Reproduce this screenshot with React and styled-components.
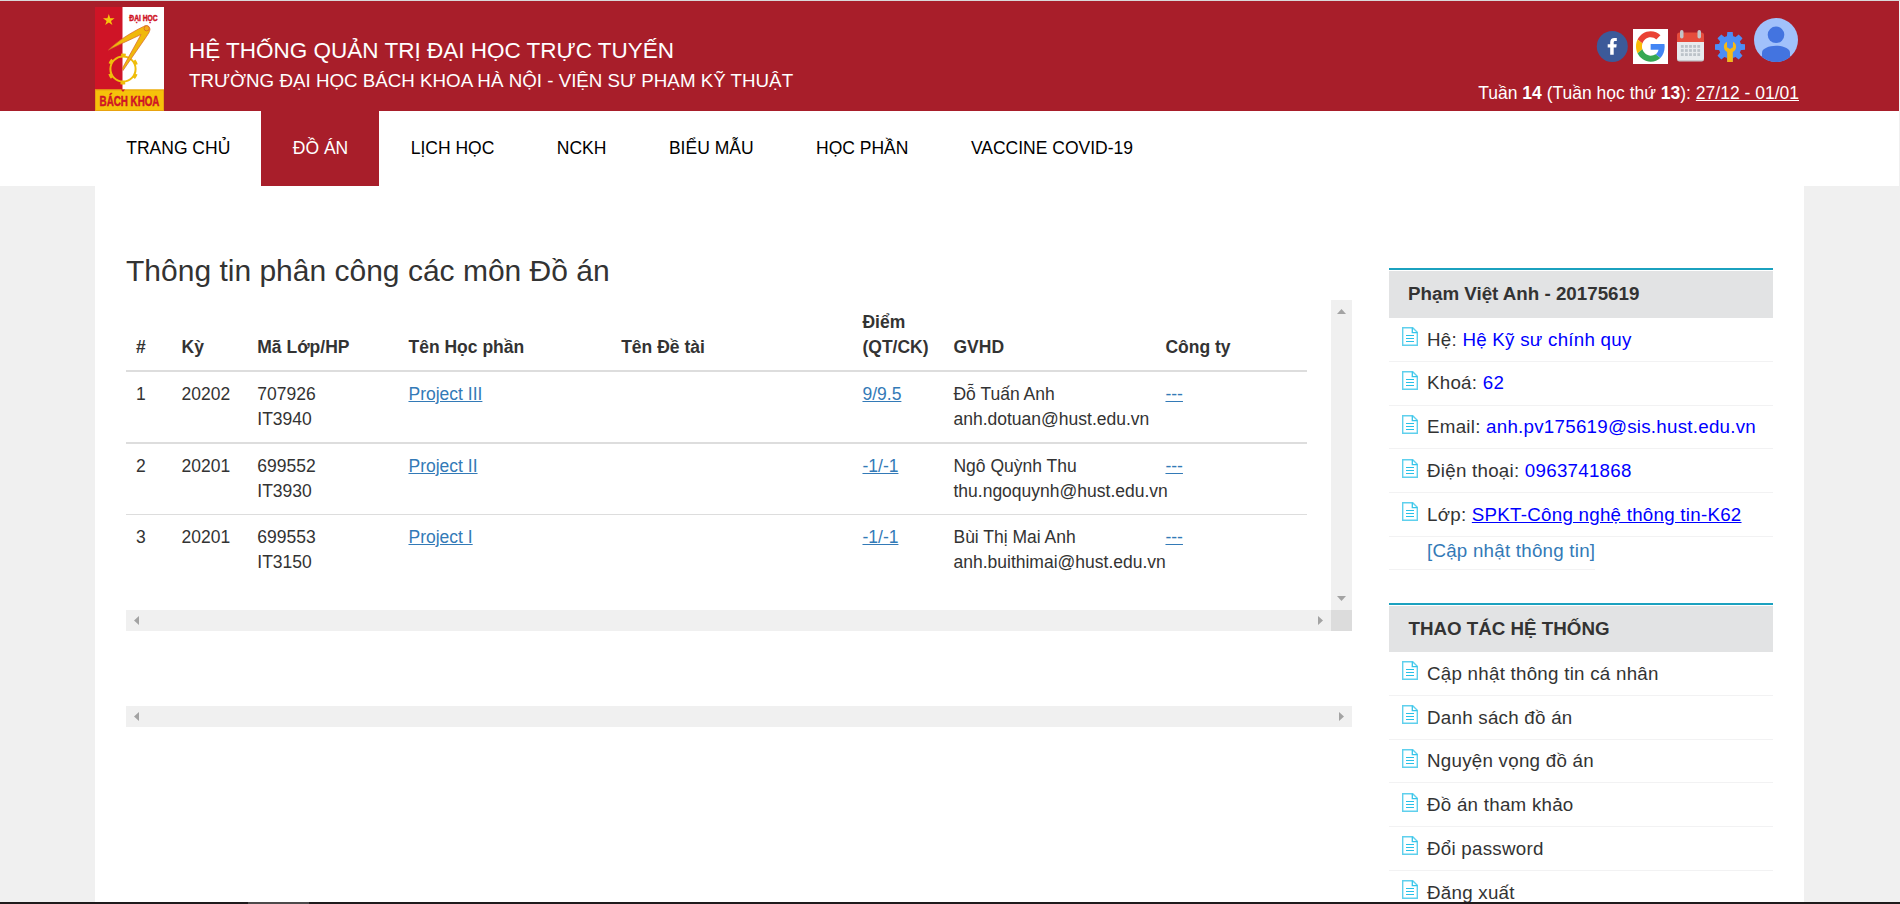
import React from 'react';
import styled, { createGlobalStyle } from 'styled-components';

const GlobalStyle = createGlobalStyle`
  * { box-sizing: border-box; }
  body {
    margin: 0;
    background: #f0f0f0;
    color: #333;
    font-family: "Liberation Sans", Arial, sans-serif;
    font-size: 17.5px;
    line-height: 25px;
    overflow: hidden;
  }
  a { color: inherit; }
`;

const Page = styled.div`
  display: flex;
  flex-direction: column;
  height: 904px;
  overflow: hidden;
  border-top: 1px solid #d9d9d9;
`;

const Header = styled.header`
  flex: none;
  height: 110px;
  margin-right: 1px;
  background: #a81e2a;
  color: #fff;
`;

const Container = styled.div`
  width: 1709px;
  margin-left: 95px;
  display: flex;
`;

const LogoBox = styled.div`
  width: 69px;
  height: 104px;
  margin-top: 6px;
  svg { display: block; overflow: visible; }
`;

const Titles = styled.div`
  flex: 1;
  padding: 33px 0 0 25px;
  white-space: nowrap;
`;

const SiteTitle = styled.div`
  font-size: 22.5px;
  line-height: 33px;
`;

const SiteSubtitle = styled.div`
  font-size: 18.75px;
  line-height: 26px;
  margin-top: 1px;
`;

const Tools = styled.div`
  display: flex;
  flex-direction: column;
  align-items: flex-end;
  padding: 17px 5px 0 0;
`;

const IconRow = styled.div`
  display: flex;
  height: 64px;
  svg { display: block; }
`;

const WeekInfo = styled.div`
  white-space: nowrap;
  line-height: 22px;
`;

const NavBar = styled.nav`
  flex: none;
  height: 75px;
  margin-right: 1px;
  background: #fff;
`;

const NavItem = styled.a`
  height: 75px;
  margin-left: ${(p) => (p.$active ? '-1px' : '0')};
  padding: 25px 31.25px 0 ${(p) => (p.$active ? '32.25px' : '31.25px')};
  white-space: nowrap;
  text-decoration: none;
  color: ${(p) => (p.$active ? '#fff' : '#000')};
  background: ${(p) => (p.$active ? '#a81e2a' : 'transparent')};
`;

const Content = styled.main`
  flex: 1;
  min-height: 0;
  width: 1709px;
  margin-left: 95px;
  padding: 0 31px;
  background: #fff;
  display: flex;
  justify-content: space-between;
  overflow: hidden;
`;

const MainColumn = styled.section`
  width: 1226px;
  padding-top: 68px;
`;

const Heading = styled.h1`
  margin: 0 0 13px;
  font-size: 30px;
  line-height: 33px;
  font-weight: 400;
  white-space: nowrap;
`;

const ScrollBox = styled.div`
  display: grid;
  grid-template-columns: 1205px 21px;
  grid-template-rows: 310px 21px;
`;

const Track = styled.div`
  background: #f0f0f0;
  display: flex;
  flex-direction: ${(p) => (p.$vertical ? 'column' : 'row')};
  justify-content: space-between;
  align-items: center;
  height: ${(p) => (p.$vertical ? '310px' : '21px')};
  padding: ${(p) => (p.$vertical ? '9px 0' : '0 8px')};
  margin-top: ${(p) => p.$gap || '0'};
  svg { display: block; fill: #a3a3a3; }
`;

const Corner = styled.div`
  background: #dcdcdc;
`;

const Table = styled.table`
  width: 1181px;
  table-layout: fixed;
  border-collapse: separate;
  border-spacing: 0;
  align-self: start;
`;

const Th = styled.th`
  padding: 10px;
  text-align: left;
  vertical-align: bottom;
  border-bottom: 2px solid #ddd;
  white-space: nowrap;
`;

const Td = styled.td`
  padding: 10px;
  vertical-align: top;
  white-space: nowrap;
  border-bottom: ${(p) => p.$line}px solid #ddd;
`;

const Link = styled.a`
  color: #337ab7;
  text-decoration: underline;
`;

const Sidebar = styled.aside`
  width: 384px;
  padding-top: 82px;
`;

const Panel = styled.section`
  height: ${(p) => p.$height || 'auto'};
  font-size: 18.75px;
  letter-spacing: 0.25px;
`;

const PanelTitle = styled.h2`
  margin: 0;
  height: ${(p) => p.$height};
  padding: 11px 0 0 ${(p) => p.$indent};
  border-top: 2px solid #1ba1bf;
  background: #e2e3e4;
  background-clip: padding-box;
  box-shadow: inset 0 1px #fff;
  font-size: 18.75px;
  line-height: 25px;
  letter-spacing: 0;
`;

const Item = styled.div`
  display: flex;
  height: 43.75px;
  padding: 7.7px 0 0 13px;
  border-bottom: 1px solid #f2f2f3;
  line-height: 27px;
  white-space: nowrap;
  svg { flex: none; margin: 1.6px 9px 0 0; display: block; }
`;

const UpdateLink = styled.a`
  display: block;
  width: 206px;
  height: 33px;
  padding-left: 38px;
  border-bottom: 1px solid #f2f2f3;
  line-height: 27px;
  letter-spacing: 0.23px;
  white-space: nowrap;
  color: #337ab7;
  text-decoration: none;
`;

const Value = styled.span`
  color: #00f;
  text-decoration: ${(p) => (p.$underline ? 'underline' : 'none')};
`;

const BottomBar = styled.div`
  flex: none;
  height: 2px;
  background: #1f1b1c;
  padding-left: 248px;
`;

const BottomMark = styled.div`
  width: 61px;
  height: 2px;
  background: #4d4a4b;
`;

const LogoText = styled.text`
  font-family: "Liberation Sans", Arial, sans-serif;
  font-weight: 700;
  font-size: ${(p) => p.$size}px;
  fill: #cf1426;
  stroke: #cf1426;
  stroke-width: 0.5px;
`;

const Logo = () => (
  <svg width="69" height="104" viewBox="0 0 69 104">
    <rect width="69" height="104" fill="#fff" />
    <rect width="27.500" height="84" fill="#cf1426" />
    <path d="M13.800 7l1.400 4.200h4.400l-3.600 2.700 1.400 4.200-3.600-2.600-3.600 2.600 1.400-4.200L8 11.200h4.400z" fill="#f7c50b" />
    <circle cx="28" cy="62" r="12.600" fill="none" stroke="#efbd0b" strokeWidth="2" />
    <circle cx="28" cy="62" r="14" fill="none" stroke="#efbd0b" strokeWidth="3" strokeDasharray="4.660 10" strokeDashoffset="-5" />
    <path d="M13.500 43C22 34.500 35 26 48.500 19.500 51 17.500 55 19 55 22.500 54.500 25.500 53 27 51.500 29.500L28 63.500 27.500 61 46 27.500C37 32 24 37.500 13.500 43z" fill="#f0b80c" stroke="#d7632b" strokeWidth=".7" />
    <circle cx="51.700" cy="21.300" r="2.600" fill="#f4ad1b" stroke="#d7632b" strokeWidth=".8" />
    <rect y="82.500" width="69" height="21.500" fill="#f6c20a" />
    <rect x=".5" y="83" width="68" height="20.500" fill="none" stroke="#e8a30f" />
    <path d="M26 82.500h4l-2 2.500z" fill="#cf1426" />
    <LogoText $size={9.2} transform="translate(34.300 13.800) scale(.73 1)">ĐẠI HỌC</LogoText>
    <LogoText $size={14.2} transform="translate(4.600 98.600) scale(.69 1)">BÁCH KHOA</LogoText>
  </svg>
);

const TEETH = [0, 45, 90, 135, 180, 225, 270, 315];
const DOT_COLS = [5.5, 9.6, 13.7, 17.8, 21.9];
const DOT_ROWS = [16.5, 20.6, 24.7];

const HeaderIcons = () => (
  <svg width="203" height="64" viewBox="1596 18 203 64">
    <circle cx="1612.300" cy="46.500" r="15.500" fill="#3c5a99" />
    <path d="M1610.200 54.700v-7.300h-2.500v-3.200h2.500v-1.900c0-2.900 1.600-4.300 4.100-4.300h2.500v3.100h-1.500c-1.300 0-1.600.7-1.600 1.600v1.500h3l-.4 3.200h-2.600v7.300z" fill="#fff" />
    <rect x="1633" y="29" width="35" height="35" fill="#fff" />
    <g transform="translate(1636 31.200) scale(.61 .635)">
      <path fill="#EA4335" d="M24 9.500c3.540 0 6.710 1.220 9.210 3.600l6.850-6.850C35.900 2.380 30.470 0 24 0 14.620 0 6.510 5.380 2.560 13.220l7.980 6.190C12.430 13.720 17.740 9.500 24 9.500z" />
      <path fill="#4285F4" d="M46.980 24.550c0-1.570-.15-3.090-.38-4.550H24v9.020h12.940c-.58 2.960-2.260 5.480-4.780 7.180l7.730 6c4.510-4.180 7.090-10.360 7.090-17.650z" />
      <path fill="#FBBC05" d="M10.530 28.590c-.48-1.450-.76-2.990-.76-4.590s.27-3.140.76-4.590l-7.980-6.190C.92 16.460 0 20.120 0 24s.92 7.540 2.560 10.780z" />
      <path fill="#34A853" d="M24 48c6.480 0 11.930-2.130 15.890-5.810l-7.730-6c-2.150 1.450-4.920 2.300-8.160 2.300-6.260 0-11.570-4.220-13.470-9.910l-7.980 6.190C6.510 42.620 14.620 48 24 48z" />
    </g>
    <g transform="translate(1677 30)">
      <rect y="8" width="27" height="23.500" rx="2.500" fill="#c9ccd0" />
      <rect y="8" width="27" height="22" rx="2" fill="#e8ebee" />
      <path d="M0 12V5q0-2.500 2.500-2.500h22Q27 2.500 27 5v7z" fill="#e64c3c" />
      <rect x="3" y="0" width="3.500" height="8.500" rx="1.700" fill="#c3c4c6" />
      <rect x="20.500" y="0" width="3.500" height="8.500" rx="1.700" fill="#c3c4c6" />
      {DOT_ROWS.map((y) => DOT_COLS.map((x) => (
        <rect key={`${x}-${y}`} x={x - 1.6} y={y - 1.5} width="2.800" height="2.800" fill="#bcc3c9" />
      )))}
    </g>
    <g transform="translate(1730 47)">
      {TEETH.map((a) => (
        <path key={a} d="M-3.300 -9L-2.700 -15H2.700L3.300 -9z" fill="#4d8df5" transform={`rotate(${a})`} />
      ))}
      <circle r="11.300" fill="#4d8df5" />
      <path d="M-2.800 15V5C-5.500 3.500-6.500 1-6 -1.500-5.700-3.500-4.500-4.500-3-5.300V0.200L0 2 3 .2V-5.300C4.500-4.500 5.700-3.500 6-1.500 6.500 1 5.500 3.500 2.800 5V15z" fill="#f7b916" />
    </g>
    <circle cx="1776" cy="40" r="22" fill="#a1c1fb" />
    <circle cx="1776" cy="34.800" r="8.300" fill="#4374e0" />
    <path d="M1762 57V52.500C1762 48.500 1769 45.700 1776 45.700S1790 48.500 1790 52.500V57A22 22 0 0 1 1762 57z" fill="#4374e0" />
  </svg>
);

const DocIcon = () => (
  <svg width="16" height="19" viewBox="0 0 16 19" fill="none">
    <path d="M.7 .7H10.700L15.300 5.300V18.200H.7z" stroke="#5fd0ed" strokeWidth="1.400" />
    <path d="M10.300 .8V5.600H15.300" stroke="#35c5ea" strokeWidth="1.300" />
    <path d="M4 8.500H12M4 11.500H12M4 14.500H12" stroke="#27c1e8" strokeWidth="1.200" />
  </svg>
);

const ARROWS = {
  up: [9, 5, 'M4.500 0L9 5H0z'],
  down: [9, 5, 'M0 0H9L4.500 5z'],
  left: [5, 9, 'M5 0V9L0 4.500z'],
  right: [5, 9, 'M0 0L5 4.500 0 9z'],
};

const Arrow = ({ to }) => {
  const [w, h, d] = ARROWS[to];
  return (
    <svg width={w} height={h} viewBox={`0 0 ${w} ${h}`}>
      <path d={d} />
    </svg>
  );
};

const NAV = ['TRANG CHỦ', 'ĐỒ ÁN', 'LỊCH HỌC', 'NCKH', 'BIỂU MẪU', 'HỌC PHẦN', 'VACCINE COVID-19'];

const COLUMNS = [
  ['#', 45.5],
  ['Kỳ', 75.8],
  ['Mã Lớp/HP', 151.2],
  ['Tên Học phần', 212.7],
  ['Tên Đề tài', 241.3],
  [<>Điểm<br />(QT/CK)</>, 91],
  ['GVHD', 212],
  ['Công ty', 151.5],
];

const ROWS = [
  { term: '20202', cls: '707926', code: 'IT3940', name: 'Project III', mark: '9/9.5', teacher: 'Đỗ Tuấn Anh', mail: 'anh.dotuan@hust.edu.vn', line: 2 },
  { term: '20201', cls: '699552', code: 'IT3930', name: 'Project II', mark: '-1/-1', teacher: 'Ngô Quỳnh Thu', mail: 'thu.ngoquynh@hust.edu.vn', line: 1 },
  { term: '20201', cls: '699553', code: 'IT3150', name: 'Project I', mark: '-1/-1', teacher: 'Bùi Thị Mai Anh', mail: 'anh.buithimai@hust.edu.vn', line: 0 },
];

const PROFILE = [
  ['Hệ', 'Hệ Kỹ sư chính quy'],
  ['Khoá', '62'],
  ['Email', 'anh.pv175619@sis.hust.edu.vn'],
  ['Điện thoại', '0963741868'],
  ['Lớp', 'SPKT-Công nghệ thông tin-K62', true],
];

const ACTIONS = ['Cập nhật thông tin cá nhân', 'Danh sách đồ án', 'Nguyện vọng đồ án', 'Đồ án tham khảo', 'Đổi password', 'Đăng xuất'];

export default function App() {
  return (
    <>
      <GlobalStyle />
      <Page>
        <Header>
          <Container>
            <LogoBox><Logo /></LogoBox>
            <Titles>
              <SiteTitle>HỆ THỐNG QUẢN TRỊ ĐẠI HỌC TRỰC TUYẾN</SiteTitle>
              <SiteSubtitle>TRƯỜNG ĐẠI HỌC BÁCH KHOA HÀ NỘI - VIỆN SƯ PHẠM KỸ THUẬT</SiteSubtitle>
            </Titles>
            <Tools>
              <IconRow><HeaderIcons /></IconRow>
              <WeekInfo>
                Tuần <b>14</b> (Tuần học thứ <b>13</b>): <u>27/12 - 01/01</u>
              </WeekInfo>
            </Tools>
          </Container>
        </Header>
        <NavBar>
          <Container>
            {NAV.map((label, i) => (
              <NavItem key={label} $active={i === 1}>{label}</NavItem>
            ))}
          </Container>
        </NavBar>
        <Content>
          <MainColumn>
            <Heading>Thông tin phân công các môn Đồ án</Heading>
            <ScrollBox>
              <Table>
                <colgroup>
                  {COLUMNS.map(([, w], i) => <col key={i} width={w} />)}
                </colgroup>
                <thead>
                  <tr>{COLUMNS.map(([label], i) => <Th key={i}>{label}</Th>)}</tr>
                </thead>
                <tbody>
                  {ROWS.map((r, i) => (
                    <tr key={r.cls}>
                      <Td $line={r.line}>{i + 1}</Td>
                      <Td $line={r.line}>{r.term}</Td>
                      <Td $line={r.line}>{r.cls}<br />{r.code}</Td>
                      <Td $line={r.line}><Link>{r.name}</Link></Td>
                      <Td $line={r.line} />
                      <Td $line={r.line}><Link>{r.mark}</Link></Td>
                      <Td $line={r.line}>{r.teacher}<br />{r.mail}</Td>
                      <Td $line={r.line}><Link>---</Link></Td>
                    </tr>
                  ))}
                </tbody>
              </Table>
              <Track $vertical><Arrow to="up" /><Arrow to="down" /></Track>
              <Track><Arrow to="left" /><Arrow to="right" /></Track>
              <Corner />
            </ScrollBox>
            <Track $gap="75px"><Arrow to="left" /><Arrow to="right" /></Track>
          </MainColumn>
          <Sidebar>
            <Panel $height="335px">
              <PanelTitle $height="50px" $indent="19px">Phạm Việt Anh - 20175619</PanelTitle>
              {PROFILE.map(([label, value, underline]) => (
                <Item key={label}>
                  <DocIcon />
                  <span>{label}: <Value $underline={underline}>{value}</Value></span>
                </Item>
              ))}
              <UpdateLink>[Cập nhật thông tin]</UpdateLink>
            </Panel>
            <Panel>
              <PanelTitle $height="49.15px" $indent="19.5px">THAO TÁC HỆ THỐNG</PanelTitle>
              {ACTIONS.map((label) => (
                <Item key={label}>
                  <DocIcon />
                  <span>{label}</span>
                </Item>
              ))}
            </Panel>
          </Sidebar>
        </Content>
        <BottomBar><BottomMark /></BottomBar>
      </Page>
    </>
  );
}
